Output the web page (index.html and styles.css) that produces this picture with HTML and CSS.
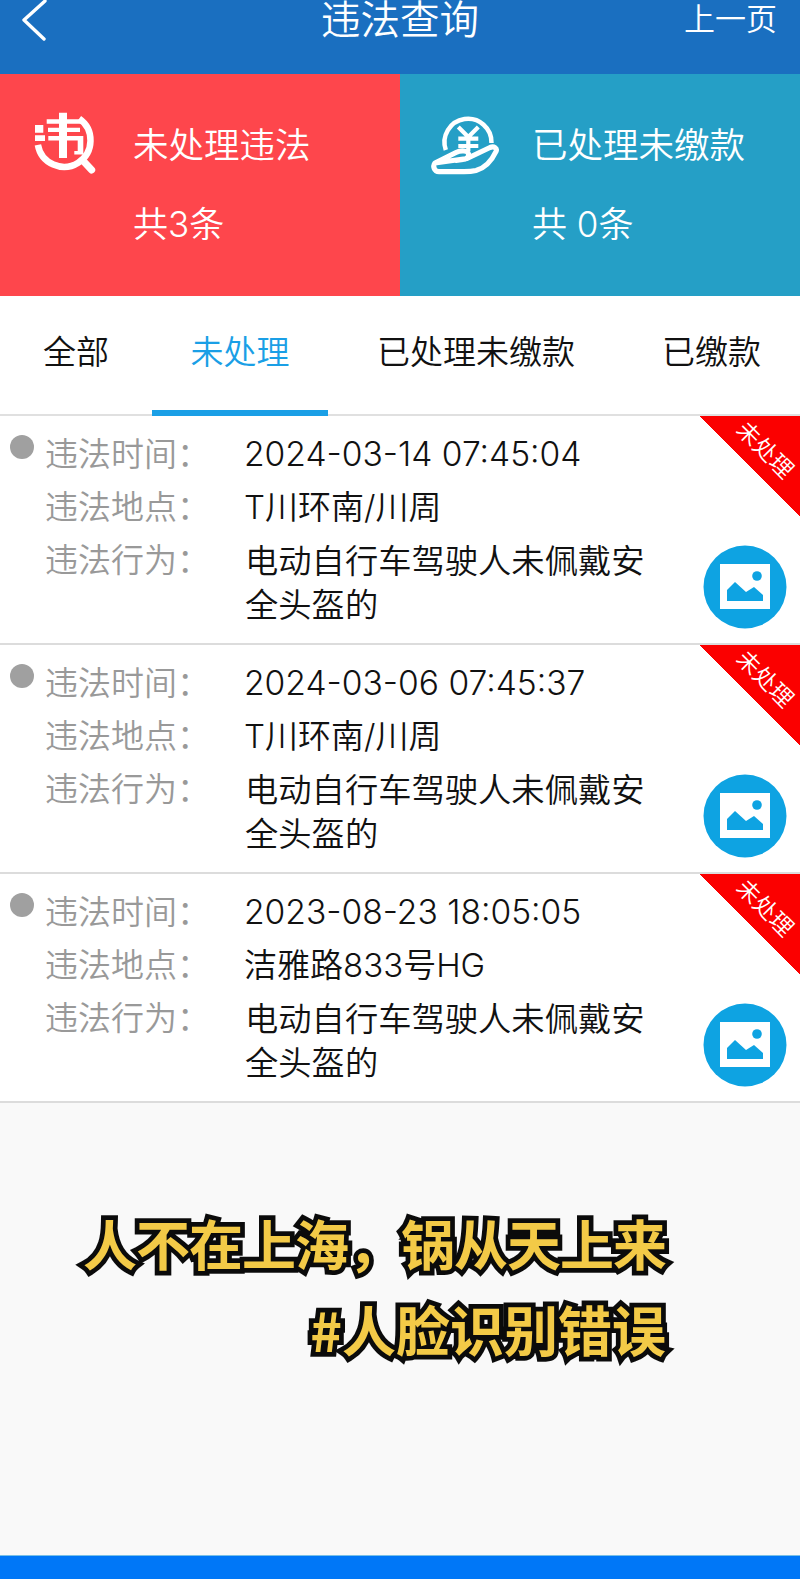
FILE: index.html
```html
<!DOCTYPE html>
<html lang="zh-CN">
<head>
<meta charset="utf-8">
<title>违法查询</title>
<link rel="stylesheet" href="styles.css">
</head>
<body>
<div class="page">
  <header class="topbar">
    <svg class="back" viewBox="0 0 30 48" width="30" height="48"><path d="M25 1 L4 20 L24 39" fill="none" stroke="#fff" stroke-width="3.4" stroke-linecap="round" stroke-linejoin="round"/></svg>
    <h1 class="title">违法查询</h1>
    <span class="prev">上一页</span>
  </header>
  <section class="panels">
    <div class="panel panel-red">
      <svg class="panel-icon" viewBox="0 0 70 70" width="70" height="70">
        <path d="M49.200 8.600 A26.500 26.500 0 1 1 7.900 34.900" fill="none" stroke="#fff" stroke-width="6.500"/>
        <path d="M53.300 51 L61.700 60" fill="none" stroke="#fff" stroke-width="7" stroke-linecap="round"/>
        <path d="M5 15h8.300v7.700H5z M5 25.300h10V31H5z" fill="#fff"/>
        <path d="M29 2.700h8V9.300h14.700v4.400H37v4H50V22H37v4h16.300v18.500h-9V41h3.400V30.500H37V48h-8V30.500H18.300V26H29v-4H18v-4.300h11v-4H16.700V9.300H29z" fill="#fff"/>
      </svg>
      <div class="panel-text">
        <div class="panel-title">未处理违法</div>
        <div class="panel-count">共3条</div>
      </div>
    </div>
    <div class="panel panel-teal">
      <svg class="panel-icon" viewBox="0 0 70 70" width="70" height="70">
        <path d="M15.800 40 A23.500 23.500 0 1 1 61.500 33" fill="none" stroke="#fff" stroke-width="4.500"/>
        <path d="M5 53 L26 42.500 C31 40 38 40.500 38.500 44 C39 47.500 36 49.500 33 49.500 L26 50.500 M37 48.500 L60 37.500 C64 36 67.500 38 66 41.500 C62 50 55 58 46 60.500 C42 61.500 38 61.700 34 61.700 H9 C4 61.700 2.500 55.500 5 53 Z" fill="none" stroke="#fff" stroke-width="5.200" stroke-linejoin="round" stroke-linecap="round"/>
        <path d="M28.300 17 L38.300 27 L48.300 17 M28.300 28.700 H48.300 M28.300 36 H48.300 M38.300 27 V41" fill="none" stroke="#fff" stroke-width="4.200"/>
      </svg>
      <div class="panel-text">
        <div class="panel-title">已处理未缴款</div>
        <div class="panel-count">共 0条</div>
      </div>
    </div>
  </section>
  <nav class="tabs">
    <span class="tab tab-all">全部</span>
    <span class="tab tab-active">未处理</span>
    <span class="tab tab-mid">已处理未缴款</span>
    <span class="tab tab-paid">已缴款</span>
  </nav>
  <main class="list">
    <article class="row">
      <span class="dot"></span>
      <dl class="fields">
        <dt>违法时间：</dt><dd class="date">2024-03-14 07:45:04</dd>
        <dt>违法地点：</dt><dd>T川环南/川周</dd>
        <dt>违法行为：</dt><dd class="wrap">电动自行车驾驶人未佩戴安全头盔的</dd>
      </dl>
      <div class="ribbon"><span>未处理</span></div>
      <button class="photo"><svg viewBox="0 0 84 84" width="84" height="84"><circle cx="42" cy="42" r="41.500" fill="#0ea3e2"/><rect x="17" y="19" width="50" height="45" fill="#fff"/><circle cx="54" cy="31" r="4.800" fill="#0ea3e2"/><path d="M24 56 V45 L32 37 L43 47 L51 42 L60 50 V56 Z" fill="#0ea3e2"/></svg></button>
    </article>
    <article class="row">
      <span class="dot"></span>
      <dl class="fields">
        <dt>违法时间：</dt><dd class="date">2024-03-06 07:45:37</dd>
        <dt>违法地点：</dt><dd>T川环南/川周</dd>
        <dt>违法行为：</dt><dd class="wrap">电动自行车驾驶人未佩戴安全头盔的</dd>
      </dl>
      <div class="ribbon"><span>未处理</span></div>
      <button class="photo"><svg viewBox="0 0 84 84" width="84" height="84"><circle cx="42" cy="42" r="41.500" fill="#0ea3e2"/><rect x="17" y="19" width="50" height="45" fill="#fff"/><circle cx="54" cy="31" r="4.800" fill="#0ea3e2"/><path d="M24 56 V45 L32 37 L43 47 L51 42 L60 50 V56 Z" fill="#0ea3e2"/></svg></button>
    </article>
    <article class="row">
      <span class="dot"></span>
      <dl class="fields">
        <dt>违法时间：</dt><dd class="date">2023-08-23 18:05:05</dd>
        <dt>违法地点：</dt><dd>洁雅路833号HG</dd>
        <dt>违法行为：</dt><dd class="wrap">电动自行车驾驶人未佩戴安全头盔的</dd>
      </dl>
      <div class="ribbon"><span>未处理</span></div>
      <button class="photo"><svg viewBox="0 0 84 84" width="84" height="84"><circle cx="42" cy="42" r="41.500" fill="#0ea3e2"/><rect x="17" y="19" width="50" height="45" fill="#fff"/><circle cx="54" cy="31" r="4.800" fill="#0ea3e2"/><path d="M24 56 V45 L32 37 L43 47 L51 42 L60 50 V56 Z" fill="#0ea3e2"/></svg></button>
    </article>
  </main>
  <section class="caption">
    <p class="line-one">人不在上海，锅从天上来</p>
    <p class="line-two">#人脸识别错误</p>
  </section>
  <footer class="bottombar"></footer>
</div>
</body>
</html>
```
FILE: styles.css
```css
* { box-sizing: border-box; }
html, body { margin: 0; padding: 0; }
body {
  font-family: "Inter", "Noto Sans CJK SC", "Noto Sans", sans-serif;
  font-weight: 350;
  background: #f9f9f9;
  color: #111;
}
.page {
  width: 800px;
  height: 1579px;
  display: flex;
  flex-direction: column;
  overflow: hidden;
}
.topbar {
  height: 74px;
  flex: none;
  background: #1a6fc0;
  color: #fff;
  position: relative;
  display: flex;
  justify-content: center;
  align-items: flex-start;
}
.back { position: absolute; left: 20px; top: 0; }
.title {
  margin: 0;
  font-size: 39.500px;
  line-height: 41px;
  font-weight: 350;
}
.prev {
  position: absolute;
  right: 23px;
  top: 1px;
  font-size: 31px;
  line-height: 36px;
}
.panels { display: flex; height: 222px; flex: none; }
.panel {
  width: 400px;
  color: #fff;
  display: flex;
  padding: 36px 0 0 30px;
  gap: 33px;
}
.panel-red { background: #fe464c; }
.panel-teal { background: #259fc6; gap: 32px; }
.panel-icon { flex: none; }
.panel-text { padding-top: 11px; }
.panel-title { font-size: 35.500px; line-height: 50px; white-space: nowrap; }
.panel-count { font-size: 35px; line-height: 50px; margin-top: 28px; white-space: nowrap; }
.tabs {
  height: 120px;
  flex: none;
  background: #fff;
  display: flex;
  font-size: 33px;
  line-height: 48px;
  border-bottom: 2px solid #e0e0e0;
}
.tab { display: block; padding-top: 32px; white-space: nowrap; }
.tab-all { padding-left: 43px; width: 152px; }
.tab-active {
  width: 176px;
  text-align: center;
  color: #1a9fe6;
  border-bottom: 6px solid #1a9fe6;
  height: 120px;
}
.tab-mid { padding-left: 49px; width: 336px; }
.tab-paid { margin-left: -2px; }
.list { flex: none; background: #fff; }
.row {
  position: relative;
  height: 229px;
  padding: 14px 0 0 10px;
  display: flex;
  overflow: hidden;
  border-bottom: 2px solid #dcdcdc;
}
.dot {
  width: 24px;
  height: 24px;
  margin-top: 5px;
  border-radius: 50%;
  background: #a0a0a0;
  flex: none;
}
.fields {
  margin: 0 0 0 11px;
  width: 610px;
  display: grid;
  grid-template-columns: 200px 1fr;
  row-gap: 5px;
  font-size: 33px;
  line-height: 48px;
  align-content: start;
}
.fields dt { color: #999; white-space: nowrap; }
.fields dd { margin: 0 0 0 -1px; color: #111; white-space: nowrap; }
.fields dd.date { font-size: 33.600px; }
.fields dd.wrap {
  white-space: normal;
  line-height: 44px;
  margin: 3px 0 0;
  font-size: 33.300px;
}
.ribbon {
  position: absolute;
  top: 0;
  right: 0;
  width: 100px;
  height: 100px;
  background: linear-gradient(to top right, transparent 50%, #fb0000 50%);
}
.ribbon span {
  position: absolute;
  top: 22px;
  left: 29px;
  width: 72px;
  text-align: center;
  color: #fff;
  font-size: 23px;
  line-height: 24px;
  transform: rotate(45deg);
  white-space: nowrap;
}
.photo {
  position: absolute;
  left: 703px;
  top: 129px;
  width: 84px;
  height: 84px;
  padding: 0;
  border: 0;
  background: none;
  display: block;
}
.photo svg { display: block; }
.caption {
  flex: 1;
  padding: 101px 134px 0 0;
  text-align: right;
}
.caption p {
  margin: 0 0 9px;
  font-family: "Noto Sans CJK SC", sans-serif;
  font-size: 54px;
  line-height: 77px;
  font-weight: 700;
  color: #f3ca47;
  -webkit-text-stroke: 9.500px #0b0b0b;
  paint-order: stroke fill;
  white-space: nowrap;
}
.caption .line-one { letter-spacing: -1px; }
.bottombar {
  height: 24px;
  flex: none;
  background: #0077f7;
  border-top: 1px solid #78c0e6;
}
```
